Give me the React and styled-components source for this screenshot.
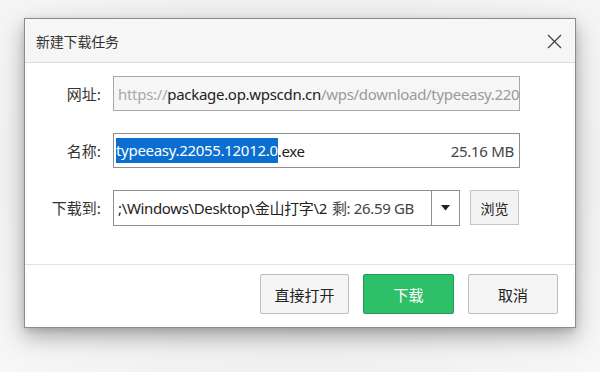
import React from "react";
import styled, { createGlobalStyle } from "styled-components";

const Global = createGlobalStyle`
  html, body { margin: 0; padding: 0; }
  body {
    background: #eeeeee;
    font-family: "Noto Sans", "Noto Sans CJK SC", sans-serif;
    color: #222;
  }
`;

const Page = styled.div`
  width: 600px;
  height: 372px;
  box-sizing: border-box;
  padding: 18px 24px 0;
  background: radial-gradient(ellipse at 50% 45%, #e6e6e6 0%, #efefef 60%, #f7f7f7 100%);
`;

const Dialog = styled.div`
  width: 552px;
  box-sizing: border-box;
  border: 1px solid #8c8c8c;
  background: #fff;
  box-shadow: 0 9px 20px rgba(0, 0, 0, 0.3), 0 2px 6px rgba(0, 0, 0, 0.12);
  display: flex;
  flex-direction: column;
`;

const TitleBar = styled.div`
  height: 43px;
  background: #f6f6f6;
  border-bottom: 1px solid #dcdcdc;
  display: flex;
  align-items: center;
  justify-content: space-between;
  padding: 0 13px 0 11px;
`;

const Title = styled.div`
  font-family: "Noto Sans CJK SC", sans-serif;
  font-size: 14px;
  color: #333;
  letter-spacing: -0.2px;
`;

const Close = styled.button`
  border: 0;
  background: none;
  padding: 0;
  width: 16px;
  height: 16px;
  display: flex;
  align-items: center;
  justify-content: center;
  margin-top: 2px;
`;

const Body = styled.div`
  display: grid;
  grid-template-columns: 76px 407px;
  grid-auto-rows: 35px;
  row-gap: 22px;
  column-gap: 12px;
  align-items: center;
  padding: 13px 0 39px;
  border-bottom: 1px solid #e2e2e2;
`;

const Label = styled.div`
  font-family: "Noto Sans CJK SC", sans-serif;
  font-size: 15px;
  color: #333;
  text-align: right;
  white-space: nowrap;
`;

const Field = styled.div`
  height: 35px;
  box-sizing: border-box;
  border: 1px solid ${(p) => (p.$disabled ? "#a8a8a8" : "#8f8f8f")};
  background: ${(p) => (p.$disabled ? "#f6f6f6" : "#fff")};
  display: flex;
  align-items: center;
  padding: 0 ${(p) => (p.$pad ? p.$pad : 4)}px 0 ${(p) => (p.$padL ? p.$padL : 4)}px;
  overflow: hidden;
  white-space: nowrap;
  font-size: 15px;
  font-family: "Noto Sans", "Noto Sans CJK SC", sans-serif;
  letter-spacing: -0.3px;
`;

const Txt = styled.span`
  color: ${(p) => p.$color || "#222"};
`;

const Selected = styled.span`
  background: #0a6fd0;
  color: #fff;
  line-height: 25px;
`;

const Size = styled.span`
  margin-left: auto;
  color: #444;
`;

const PathRow = styled.div`
  display: flex;
  align-items: center;
  gap: 10px;
`;

const Select = styled.div`
  width: 347px;
  height: 36px;
  box-sizing: border-box;
  border: 1px solid #8f8f8f;
  display: flex;
  background: #fff;
`;

const SelectText = styled.div`
  flex: 1;
  display: flex;
  align-items: center;
  padding-left: 4px;
  overflow: hidden;
  white-space: nowrap;
  font-size: 15px;
  letter-spacing: -0.35px;
  font-family: "Noto Sans", "Noto Sans CJK SC", sans-serif;
  color: #222;
`;

const Free = styled.span`
  color: #444;
  margin-left: 5px;
`;

const Arrow = styled.div`
  width: 27px;
  border-left: 1px solid #8f8f8f;
  display: flex;
  align-items: center;
  justify-content: center;
`;

const Browse = styled.button`
  width: 49px;
  height: 35px;
  box-sizing: border-box;
  border: 1px solid #c4c4c4;
  background: #f3f3f3;
  font-family: "Noto Sans CJK SC", sans-serif;
  font-size: 14px;
  color: #222;
  padding: 0;
`;

const Footer = styled.div`
  display: flex;
  justify-content: flex-end;
  gap: 14px;
  padding: 9px 17px 13px 0;
`;

const Btn = styled.button`
  width: ${(p) => p.$w || 90}px;
  height: 40px;
  box-sizing: border-box;
  border-radius: 2px;
  border: 1px solid ${(p) => (p.$primary ? "#1f9d52" : "#bdbdbd")};
  background: ${(p) => (p.$primary ? "#2ebf69" : "#f5f5f5")};
  color: ${(p) => (p.$primary ? "#fff" : "#222")};
  font-family: "Noto Sans CJK SC", sans-serif;
  font-size: 15px;
  padding: 0;
`;

export default function App() {
  return (
    <>
      <Global />
      <Page>
        <Dialog>
          <TitleBar>
            <Title>新建下载任务</Title>
            <Close aria-label="关闭">
              <svg width="15" height="15" viewBox="0 0 15 15">
                <path d="M1 1L14 14M14 1L1 14" stroke="#444" strokeWidth="1.3" fill="none" />
              </svg>
            </Close>
          </TitleBar>
          <Body>
            <Label>网址:</Label>
            <Field $disabled>
              <Txt $color="#a9a9a9">https://</Txt>
              <Txt $color="#222">package.op.wpscdn.cn</Txt>
              <Txt $color="#9a9a9a">/wps/download/typeeasy.22055.12012.0.exe</Txt>
            </Field>

            <Label>名称:</Label>
            <Field $padL={2} $pad={5}>
              <Selected>typeeasy.22055.12012.0</Selected>
              <Txt>.exe</Txt>
              <Size>25.16 MB</Size>
            </Field>

            <Label>下载到:</Label>
            <PathRow>
              <Select>
                <SelectText>
                  <span>;\Windows\Desktop\金山打字\2</span>
                  <Free>剩: 26.59 GB</Free>
                </SelectText>
                <Arrow>
                  <svg width="9" height="6" viewBox="0 0 9 6">
                    <path d="M0 0H9L4.5 5.5Z" fill="#222" />
                  </svg>
                </Arrow>
              </Select>
              <Browse>浏览</Browse>
            </PathRow>
          </Body>
          <Footer>
            <Btn $w={89}>直接打开</Btn>
            <Btn $w={91} $primary>下载</Btn>
            <Btn $w={90}>取消</Btn>
          </Footer>
        </Dialog>
      </Page>
    </>
  );
}
